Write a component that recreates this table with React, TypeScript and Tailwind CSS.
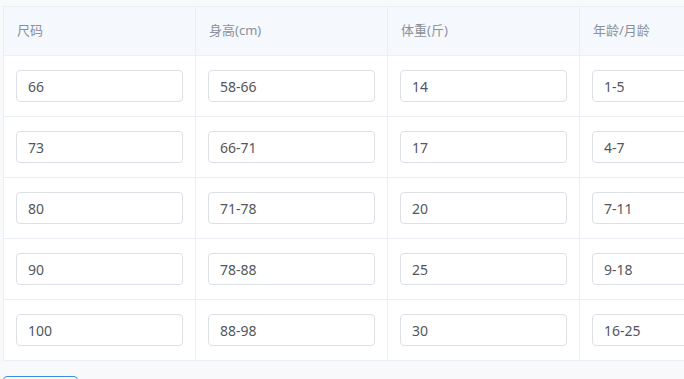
import React from "react";

const headers = ["尺码", "身高(cm)", "体重(斤)", "年龄/月龄"];
const rows = [
  ["66", "58-66", "14", "1-5"],
  ["73", "66-71", "17", "4-7"],
  ["80", "71-78", "20", "7-11"],
  ["90", "78-88", "25", "9-18"],
  ["100", "88-98", "30", "16-25"],
];

export default function App() {
  return (
    <div
      className="w-[684px] h-[379px] overflow-hidden bg-[#f8f9fa] pl-[3px] pt-[6px]"
      style={{ fontFamily: '"Noto Sans", "Noto Sans CJK SC", sans-serif' }}
    >
      <div className="w-[800px] bg-white border-t border-l border-[#ebeef5]">
        <div className="flex h-[49px] bg-[#f5f8fc] border-b border-[#ebeef5]">
          {headers.map((h) => (
            <div
              key={h}
              className="w-[192px] shrink-0 border-r border-[#ebeef5] pl-[13px] flex items-center text-[13px] text-[#8c9099]"
            >
              {h}
            </div>
          ))}
        </div>
        {rows.map((r, i) => (
          <div key={i} className="flex h-[61px] border-b border-[#ebeef5]">
            {r.map((v, j) => (
              <div
                key={j}
                className="w-[192px] shrink-0 border-r border-[#ebeef5] px-[12px] flex items-center"
              >
                <div className="w-full h-[32px] border border-[#dcdfe6] rounded-[4px] bg-white flex items-center px-[11px] text-[14px] text-[#53565c]">
                  {v}
                </div>
              </div>
            ))}
          </div>
        ))}
      </div>
      <div className="mt-[15px] w-[75px] h-[20px] border border-[#3a8ee6] rounded-[4px] bg-white" />
    </div>
  );
}
